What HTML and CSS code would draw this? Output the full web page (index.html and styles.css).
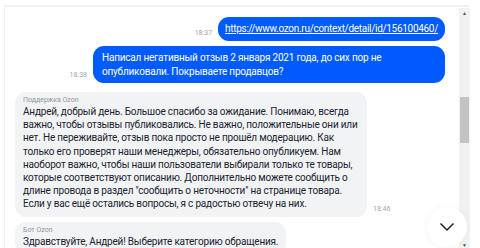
FILE: index.html
```html
<html>
<head>
<title>Чат с поддержкой</title>
<link rel="stylesheet" href="styles.css">
</head>
<body>
<div class="frame">
  <div class="chat">
    <div class="row out">
      <span class="time">18:37</span>
      <div class="bubble blue link"><a href="#">https://www.ozon.ru/context/detail/id/156100460/</a></div>
    </div>
    <div class="row out">
      <span class="time">18:38</span>
      <div class="bubble blue">Написал негативный отзыв 2 января 2021 года, до сих пор не опубликовали. Покрываете продавцов?</div>
    </div>
    <div class="row in">
      <div class="bubble gray">
        <div class="who">Поддержка Ozon</div>
        Андрей, добрый день. Большое спасибо за ожидание. Понимаю, всегда важно, чтобы отзывы публиковались. Не важно, положительные они или нет. Не переживайте, отзыв пока просто не прошёл модерацию. Как только его проверят наши менеджеры, обязательно опубликуем. Нам наоборот важно, чтобы наши пользователи выбирали только те товары, которые соответствуют описанию. Дополнительно можете сообщить о длине провода в раздел "сообщить о неточности" на странице товара. Если у вас ещё остались вопросы, я с радостью отвечу на них.
      </div>
      <span class="time">18:46</span>
    </div>
    <div class="row in">
      <div class="bubble gray">
        <div class="who">Бот Ozon</div>
        Здравствуйте, Андрей! Выберите категорию обращения.
      </div>
    </div>
  </div>
  <div class="scrollbar">
    <span class="arrow">&#9650;</span>
    <div class="track"><div class="thumb"></div></div>
    <span class="arrow">&#9660;</span>
  </div>
  <div class="down">
    <svg width="16" height="10" viewBox="0 0 16 10"><path d="M1.5 1.5 L8 8 L14.5 1.5" fill="none" stroke="#1a1f2b" stroke-width="1.5"/></svg>
  </div>
</div>
</body>
</html>
```

FILE: styles.css
```css
body { margin:0; background:#fff; font-family:Roboto, Arial, sans-serif; color:#001a34; overflow:hidden; }
.frame { position:relative; display:flex; margin:5px 10px 0 4px; height:243px; border-top:2px solid #f0f0f2; border-left:1px solid #f0f0f2; }
.chat { flex:1; display:flex; flex-direction:column; gap:5px; padding:10px 14px 0 10px; overflow:hidden; }
.row { display:flex; align-items:flex-end; gap:6px; }
.row.out { justify-content:flex-end; }
.row.in { justify-content:flex-start; margin-top:4px; }
.row.in + .row.in { margin-top:0; }
.time { font-size:7px; color:#a0a6ad; margin-bottom:4px; }
.bubble { box-sizing:border-box; max-width:352px; font-size:10px; letter-spacing:-0.2px; line-height:14px; padding:5px 9px 4px; border-radius:11px; }
.blue { background:#005bff; color:#fff; }
.link { padding:5px 7px; }
.link a { color:#fff; letter-spacing:-0.3px; }
.gray { background:#f2f3f5; padding:4px 8px 6px; line-height:13.2px; color:#1b2330; }
.who { font-size:7px; line-height:9px; color:#8d949c; letter-spacing:0; }
.scrollbar { width:11px; display:flex; flex-direction:column; align-items:center; background:#f1f1f1; margin-top:1px; }
.arrow { font-size:5px; color:#505050; line-height:10px; }
.track { flex:1; width:100%; }
.thumb { margin:79px 1px 0; height:46px; background:#c3c3c3; }
.down { position:absolute; right:3px; bottom:3px; width:40px; height:40px; border-radius:50%; background:#fff; box-shadow:0 0 6px rgba(0,0,0,0.05); display:flex; align-items:center; justify-content:center; }
```
